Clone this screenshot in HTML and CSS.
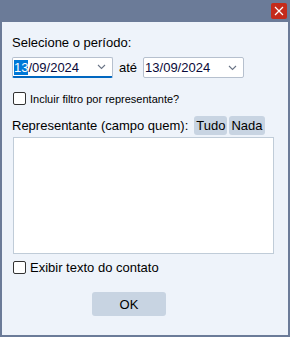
FILE: index.html
```html
<!DOCTYPE html>
<html lang="pt">
<head>
    <meta charset="UTF-8">
    <title>Filtro</title>
    <link rel="stylesheet" href="styles.css">
</head>
<body>
    <div class="window">
        <div class="titlebar">
            <button class="close-btn" type="button">
                <svg width="10" height="10" viewBox="0 0 10 10"><path d="M1 1L9 9M9 1L1 9" stroke="#fff" stroke-width="1.2"/></svg>
            </button>
        </div>
        <div class="content">
            <p class="label">Selecione o período:</p>
            <div class="period">
                <div class="date focused"><span class="sel">13</span>/09/2024<span class="arrow"><svg width="9" height="6" viewBox="0 0 9 6"><path d="M1 1L4.5 4.5L8 1" fill="none" stroke="#6a7486" stroke-width="1.1"/></svg></span></div>
                <span class="ate">até</span>
                <div class="date">13/09/2024<span class="arrow"><svg width="9" height="6" viewBox="0 0 9 6"><path d="M1 1L4.5 4.5L8 1" fill="none" stroke="#6a7486" stroke-width="1.1"/></svg></span></div>
            </div>
            <label class="check small"><span class="box"></span>Incluir filtro por representante?</label>
            <div class="rep-row">
                <span>Representante (campo quem):</span>
                <button class="mini-btn" type="button">Tudo</button>
                <button class="mini-btn" type="button">Nada</button>
            </div>
            <div class="listbox"></div>
            <label class="check last"><span class="box"></span>Exibir texto do contato</label>
            <div class="actions">
                <button class="ok-btn" type="button">OK</button>
            </div>
        </div>
    </div>
</body>
</html>
```
FILE: styles.css
```css
body {
    margin: 0;
    font-family: "Liberation Sans", Arial, sans-serif;
    font-size: 13px;
    color: #000;
}
.window {
    width: 290px;
    height: 337px;
    box-sizing: border-box;
    background-color: #6b7b98;
    padding: 0 2px 2px 2px;
    display: flex;
    flex-direction: column;
}
.titlebar {
    height: 22px;
    display: flex;
    justify-content: flex-end;
    align-items: flex-start;
    padding-top: 3px;
    box-sizing: border-box;
}
.close-btn {
    width: 16px;
    height: 16px;
    margin-right: 1px;
    border: none;
    border-radius: 2px;
    background-color: #c42b1c;
    padding: 0;
    display: flex;
    align-items: center;
    justify-content: center;
}
.content {
    flex: 1;
    background-color: #eef3fa;
    padding: 13px 14px 0 10px;
}
.label {
    margin: 0 0 7px 0;
}
.period {
    display: flex;
    align-items: center;
    gap: 6px;
}
.date {
    width: 101px;
    height: 21px;
    box-sizing: border-box;
    background-color: #fff;
    border: 1px solid #b6c0ce;
    border-radius: 2px;
    display: flex;
    align-items: center;
    padding-left: 1px;
    font-size: 13px;
    color: #0a0a3a;
}
.date.focused {
    border-bottom: 2px solid #0067c0;
}
.sel {
    background-color: #0078d7;
    color: #fff;
}
.arrow {
    margin-left: auto;
    margin-right: 6px;
    display: flex;
}
.check {
    display: flex;
    align-items: center;
    gap: 4px;
}
.check.small {
    font-size: 11px;
    margin: 14px 0 0 1px;
}
.box {
    width: 11px;
    height: 11px;
    border: 1px solid #333;
    border-radius: 2px;
    background-color: #fff;
}
.rep-row {
    display: flex;
    align-items: center;
    gap: 2px;
    margin-top: 11px;
}
.rep-row span {
    margin-right: 4px;
}
.mini-btn {
    font-family: inherit;
    font-size: 13px;
    background-color: #c8d4e2;
    border: none;
    border-radius: 3px;
    padding: 2px 2px;
}
.listbox {
    margin-top: 2px;
    margin-left: 1px;
    height: 115px;
    background-color: #fff;
    border: 1px solid #c0ccd8;
}
.check.last {
    margin: 6px 0 0 1px;
}
.actions {
    display: flex;
    padding-left: 80px;
    margin-top: 17px;
}
.ok-btn {
    width: 74px;
    height: 24px;
    font-family: inherit;
    font-size: 13px;
    background-color: #c8d4e2;
    border: none;
    border-radius: 3px;
}
```
